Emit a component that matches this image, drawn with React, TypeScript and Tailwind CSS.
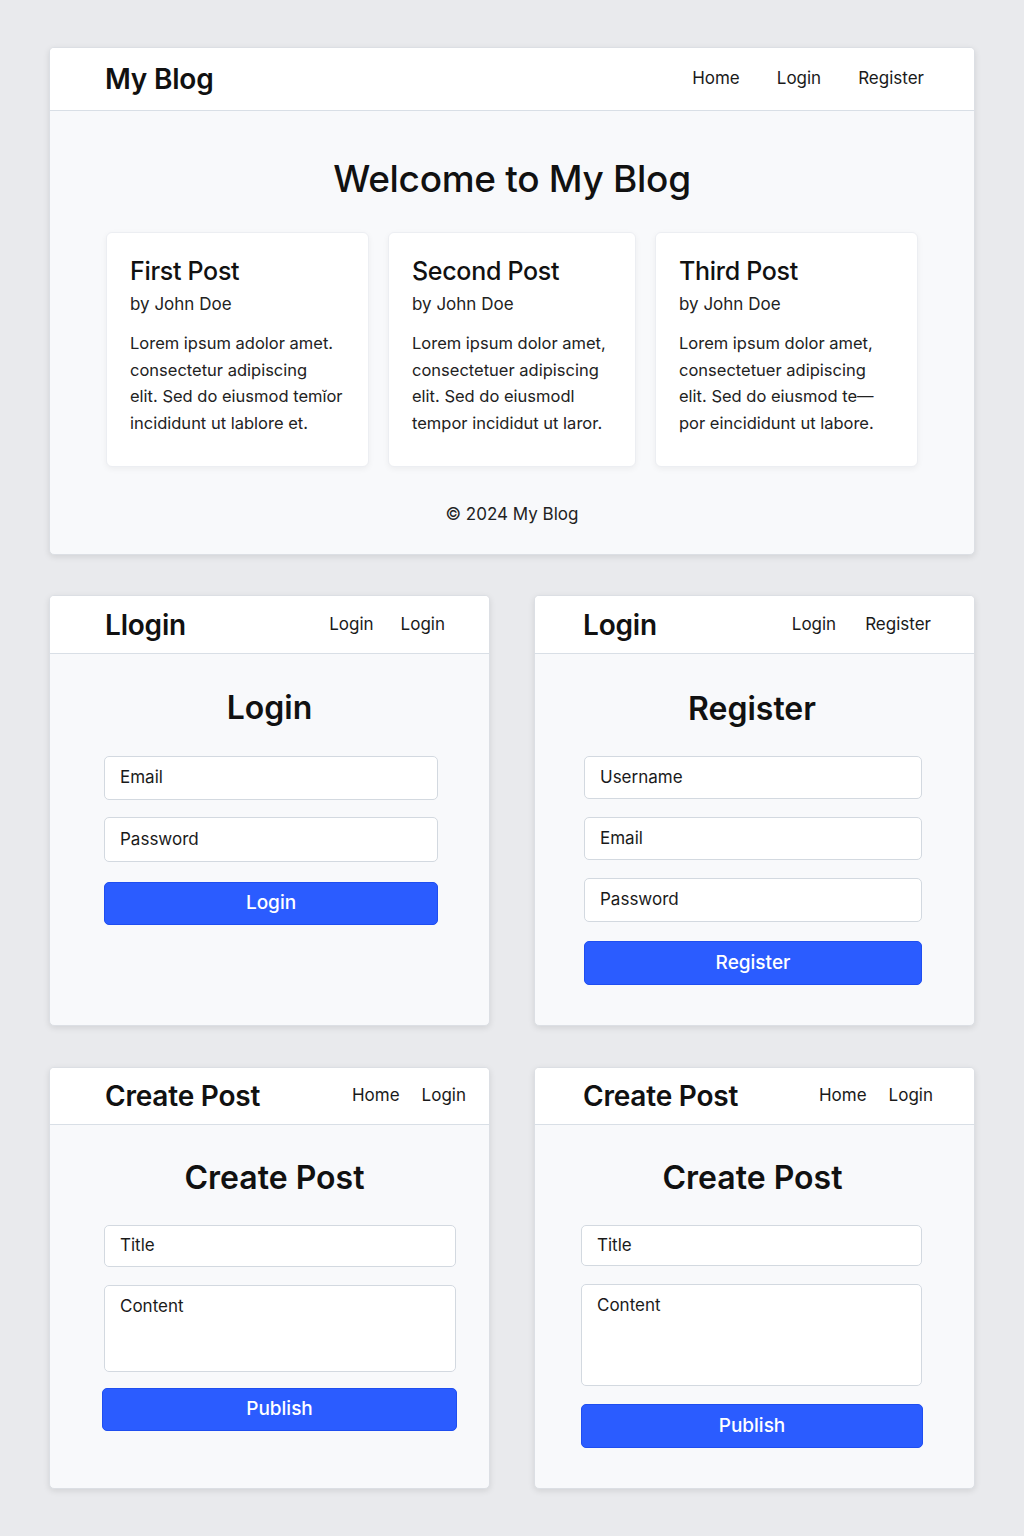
import React from "react";

const font = { fontFamily: "Inter, 'Noto Sans', sans-serif" };

function Header({
  title,
  links,
  pl,
  pr,
  h,
  gapCls,
}: {
  title: string;
  links: string[];
  pl: string;
  pr: string;
  h: string;
  gapCls: string;
}) {
  return (
    <div className={`flex items-center justify-between bg-white border-b border-[#d9dfe6] ${pl} ${pr} ${h}`}>
      <div className="text-[28px] font-semibold text-[#111] tracking-[-0.2px]">{title}</div>
      <div className={`flex items-center ${gapCls} text-[17px] text-[#1a1a1a]`}>
        {links.map((l, i) => (
          <span key={i}>{l}</span>
        ))}
      </div>
    </div>
  );
}

function Field({ label, cls }: { label: string; cls: string }) {
  return (
    <div className={`bg-white border border-[#d3d9e0] rounded-[5px] pl-[15px] text-[17px] text-[#1a1a1a] ${cls}`}>
      {label}
    </div>
  );
}

function Btn({ label, cls }: { label: string; cls: string }) {
  return (
    <div className={`bg-[#2b5cff] border border-[#1f4ef0] rounded-[5px] flex items-center justify-center text-white text-[19px] font-medium ${cls}`}>
      {label}
    </div>
  );
}

function Card({ title, lines, w }: { title: string; lines: string[]; w: string }) {
  return (
    <div className={`bg-white rounded-[6px] border border-[#eceef2] shadow-[0_2px_6px_rgba(0,0,0,0.05)] h-[235px] pl-[23px] pt-[22px] ${w}`}>
      <div className="text-[25px] font-medium text-[#111] leading-[32px] tracking-[-0.3px]">{title}</div>
      <div className="text-[17px] text-[#222] leading-[24px] mt-[5px]">by John Doe</div>
      <div className="text-[16.5px] text-[#222] leading-[26.5px] mt-[14px] whitespace-nowrap">
        {lines.map((l, i) => (
          <div key={i}>{l}</div>
        ))}
      </div>
    </div>
  );
}

const panelCls =
  "bg-[#f8f9fb] rounded-[5px] border border-[#dcdfe4] shadow-[0_2px_6px_rgba(0,0,0,0.10)] overflow-hidden";

export default function App() {
  return (
    <div className="min-h-[1536px] bg-[#e9eaed] px-[49px] pt-[47px]" style={font}>
      {/* Main blog panel */}
      <div className={`${panelCls} h-[508px]`}>
        <Header
          title="My Blog"
          links={["Home", "Login", "Register"]}
          pl="pl-[55px]"
          pr="pr-[50px]"
          h="h-[63px]"
          gapCls="gap-[37px]"
        />
        <div className="flex flex-col items-center">
          <div className="mt-[46px] text-[37px] font-medium text-[#111] leading-[44px] tracking-[-0.3px]">
            Welcome to My Blog
          </div>
          <div className="mt-[31px] flex gap-[19px]">
            <Card
              w="w-[263px]"
              title="First Post"
              lines={[
                "Lorem ipsum adolor amet.",
                "consectetur adipiscing",
                "elit. Sed do eiusmod temĭor",
                "incididunt ut lablore et.",
              ]}
            />
            <Card
              w="w-[248px]"
              title="Second Post"
              lines={[
                "Lorem ipsum dolor amet,",
                "consectetuer adipiscing",
                "elit. Sed do eiusmodl",
                "tempor incididut ut laror.",
              ]}
            />
            <Card
              w="w-[263px]"
              title="Third Post"
              lines={[
                "Lorem ipsum dolor amet,",
                "consectetuer adipiscing",
                "elit. Sed do eiusmod te—",
                "por eincididunt ut labore.",
              ]}
            />
          </div>
          <div className="mt-[35px] text-[17px] text-[#222] leading-[24px]">© 2024 My Blog</div>
        </div>
      </div>

      <div className="mt-[40px] grid grid-cols-2 gap-x-[44px] gap-y-[41px]">
        {/* Login panel */}
        <div className={`${panelCls} h-[431px]`}>
          <Header
            title="Llogin"
            links={["Login", "Login"]}
            pl="pl-[55px]"
            pr="pr-[44px]"
            h="h-[58px]"
            gapCls="gap-[27px]"
          />
          <div className="text-center mt-[34px] text-[32px] font-semibold text-[#111] leading-[40px]">Login</div>
          <div className="ml-[54px] w-[334px] mt-[28px] flex flex-col">
            <Field label="Email" cls="h-[44px] flex items-center" />
            <Field label="Password" cls="h-[45px] flex items-center mt-[17px]" />
            <Btn label="Login" cls="h-[43px] mt-[20px]" />
          </div>
        </div>

        {/* Register panel */}
        <div className={`${panelCls} h-[431px]`}>
          <Header
            title="Login"
            links={["Login", "Register"]}
            pl="pl-[48px]"
            pr="pr-[43px]"
            h="h-[58px]"
            gapCls="gap-[29px]"
          />
          <div className="text-center mt-[35px] text-[32px] font-semibold text-[#111] leading-[40px] pr-[5px]">Register</div>
          <div className="ml-[49px] w-[338px] mt-[27px] flex flex-col">
            <Field label="Username" cls="h-[43px] flex items-center text-[16px]" />
            <Field label="Email" cls="h-[43px] flex items-center mt-[18px]" />
            <Field label="Password" cls="h-[44px] flex items-center mt-[18px] text-[16px]" />
            <Btn label="Register" cls="h-[44px] mt-[19px]" />
          </div>
        </div>

        {/* Create post left */}
        <div className={`${panelCls} h-[422px]`}>
          <Header
            title="Create Post"
            links={["Home", "Login"]}
            pl="pl-[55px]"
            pr="pr-[23px]"
            h="h-[57px]"
            gapCls="gap-[22px]"
          />
          <div className="text-center mt-[33px] text-[32px] font-semibold text-[#111] leading-[40px] pl-[10px]">
            Create Post
          </div>
          <div className="mt-[27px] flex flex-col">
            <Field label="Title" cls="ml-[54px] w-[352px] h-[42px] flex items-center pl-[12px]" />
            <Field label="Content" cls="ml-[54px] w-[352px] h-[87px] mt-[18px] pt-[8px] pl-[13px]" />
            <Btn label="Publish" cls="ml-[52px] w-[355px] h-[43px] mt-[16px]" />
          </div>
        </div>

        {/* Create post right */}
        <div className={`${panelCls} h-[422px]`}>
          <Header
            title="Create Post"
            links={["Home", "Login"]}
            pl="pl-[48px]"
            pr="pr-[41px]"
            h="h-[57px]"
            gapCls="gap-[22px]"
          />
          <div className="text-center mt-[33px] text-[32px] font-semibold text-[#111] leading-[40px] pr-[4px]">Create Post</div>
          <div className="mt-[27px] flex flex-col">
            <Field label="Title" cls="ml-[46px] w-[341px] h-[41px] flex items-center pl-[13px]" />
            <Field label="Content" cls="ml-[46px] w-[341px] h-[102px] mt-[18px] pt-[8px] pl-[13px]" />
            <Btn label="Publish" cls="ml-[46px] w-[342px] h-[44px] mt-[18px]" />
          </div>
        </div>
      </div>
    </div>
  );
}
